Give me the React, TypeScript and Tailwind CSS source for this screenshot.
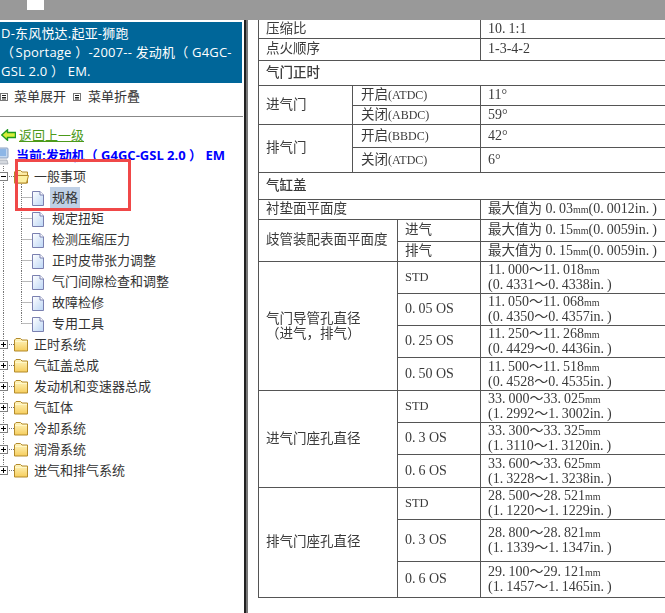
import React from "react";

const UI = '"Open Sans","Noto Sans CJK SC",sans-serif';

function MenuIcon() {
  return (
    <svg width="8" height="8" viewBox="0 0 8 8" className="shrink-0" aria-hidden>
      <rect x="0.5" y="0.5" width="7" height="7" fill="#fff" stroke="#777" />
      <path d="M2 2.5h4M2 4.5h4M2 6h4" stroke="#222" strokeWidth="1" />
    </svg>
  );
}

function BackArrow() {
  return (
    <svg width="15" height="12" viewBox="0 0 15 12" aria-hidden>
      <path d="M0.7 6 6.5 0.8V3.5H14.5V8.5H6.5V11.2Z" fill="#d8ee3a" stroke="#1f9a1f" strokeWidth="1.4" />
    </svg>
  );
}

function Computer() {
  return (
    <svg width="9" height="18" viewBox="0 0 9 18" aria-hidden>
      <rect x="-4" y="1" width="12" height="10" rx="1" fill="#c4d8f0" stroke="#8aa0c0" />
      <rect x="-3" y="2" width="9" height="7" fill="#8db6e6" />
      <path d="M-4 13h11l1 4H-4Z" fill="#d5d9df" stroke="#9a9fa9" strokeWidth="0.7" />
    </svg>
  );
}

function Folder({ x, open }: { x: number; open?: boolean }) {
  return (
    <g transform={`translate(${x},3)`}>
      <path d="M0.5 14V3L2 1.5H6.5L8 3H13.5V14Z" fill="url(#fold)" stroke="#b38a2a" />
      {open ? (
        <path d="M0.5 14 3 6.5H14.5L12.5 14Z" fill="#fdf0a2" stroke="#b38a2a" />
      ) : (
        <path d="M1 4.5H13" stroke="#fff7c8" />
      )}
    </g>
  );
}

function Doc({ x }: { x: number }) {
  return (
    <g transform={`translate(${x},4)`}>
      <path d="M0.5 0.5H8L11.5 4V14.5H0.5Z" fill="url(#doc)" stroke="#7a80b0" />
      <path d="M8 0.5V4H11.5" fill="#fff" stroke="#7a80b0" />
    </g>
  );
}

const dot = { stroke: "#777", strokeDasharray: "1 1" };

function Glyph({ kind, last, open, end }: { kind: "plus" | "minus" | "doc"; last?: boolean; open?: boolean; end?: boolean }) {
  const isDoc = kind === "doc";
  return (
    <svg width="46" height="21" viewBox="0 0 46 21" className="shrink-0" aria-hidden>
      <defs>
        <linearGradient id="fold" x1="0" y1="0" x2="0" y2="1">
          <stop offset="0" stopColor="#fff6c2" />
          <stop offset="1" stopColor="#f6cd5c" />
        </linearGradient>
        <linearGradient id="doc" x1="0" y1="0" x2="1" y2="1">
          <stop offset="0" stopColor="#ffffff" />
          <stop offset="1" stopColor="#bcd6f5" />
        </linearGradient>
      </defs>
      <path d={end ? "M3.5 0V10" : "M3.5 0V21"} {...dot} />
      {isDoc ? (
        <>
          <path d={last ? "M21.5 0V10.5" : "M21.5 0V21"} {...dot} />
          <path d="M21.5 10.5H32" {...dot} />
          <Doc x={32} />
        </>
      ) : (
        <>
          <path d="M7 10.5H14" {...dot} />
          {open && <path d="M21.5 16V21" {...dot} />}
          <rect x="-0.5" y="6.5" width="8" height="8" fill="#fff" stroke="#808080" />
          <path d="M1 10.5H6" stroke="#000" />
          {kind === "plus" && <path d="M3.5 8V13" stroke="#000" />}
          <Folder x={14} open={open} />
        </>
      )}
    </svg>
  );
}

function TreeRow({ label, kind, last, open, selected, end }: { label: string; kind: "plus" | "minus" | "doc"; last?: boolean; open?: boolean; selected?: boolean; end?: boolean }) {
  return (
    <div className="flex h-[21px] items-center whitespace-nowrap text-[13px] text-[#333]">
      <Glyph kind={kind} last={last} open={open} end={end} />
      <span className={kind === "doc" ? (selected ? "ml-[4px] bg-[#bfd0e6] px-[2px] leading-[21px]" : "ml-[6px]") : "-ml-[12px]"}>{label}</span>
    </div>
  );
}

/* The scanned table sets digits on a full-width grid: dots get a gap, "mm" is narrow, CJK is a little smaller than the Latin body. */
function Rich({ text, small }: { text: string; small?: boolean }) {
  const parts = text.split(/(\.|mm|[\u4e00-\u9fff]+)/).filter(Boolean);
  return (
    <>
      {parts.map((p, i) => {
        if (p === ".") return <span key={i} className="mr-[3px]">.</span>;
        if (p === "mm") return <span key={i} className="text-[10px]">mm</span>;
        if (/[\u4e00-\u9fff]/.test(p)) return <span key={i} className="text-[13.5px]">{p}</span>;
        return <span key={i} className={small ? "text-[12px]" : ""}>{p}</span>;
      })}
    </>
  );
}

type Cell = { t?: string; l2?: string; cs?: number; rs?: number; cjk?: boolean; bold?: boolean; pl?: boolean; stdw?: boolean };
type Row = { h: number; cells: Cell[] };

const two = (a: string, b: string): Cell => ({ t: a, l2: b });

const rows: Row[] = [
  { h: 18, cells: [{ t: "压缩比", cs: 3, cjk: true }, { t: "10.1:1" }] },
  { h: 22, cells: [{ t: "点火顺序", cs: 3, cjk: true }, { t: "1-3-4-2" }] },
  { h: 25, cells: [{ t: "气门正时", cs: 4, cjk: true, bold: true }] },
  { h: 20, cells: [{ t: "进气门", rs: 2, cjk: true }, { t: "开启(ATDC)", cs: 2, pl: true }, { t: "11°" }] },
  { h: 19, cells: [{ t: "关闭(ABDC)", cs: 2, pl: true }, { t: "59°" }] },
  { h: 23, cells: [{ t: "排气门", rs: 2, cjk: true }, { t: "开启(BBDC)", cs: 2, pl: true }, { t: "42°" }] },
  { h: 25, cells: [{ t: "关闭(ATDC)", cs: 2, pl: true }, { t: "6°" }] },
  { h: 27, cells: [{ t: "气缸盖", cs: 4, cjk: true, bold: true }] },
  { h: 20, cells: [{ t: "衬垫面平面度", cs: 3, cjk: true }, { t: "最大值为 0.03mm(0.0012in.)" }] },
  { h: 22, cells: [{ t: "歧管装配表面平面度", cs: 2, rs: 2, cjk: true }, { t: "进气", cjk: true }, { t: "最大值为 0.15mm(0.0059in.)" }] },
  { h: 20, cells: [{ t: "排气", cjk: true }, { t: "最大值为 0.15mm(0.0059in.)" }] },
  { h: 32, cells: [{ t: "气门导管孔直径", l2: "（进气，排气）", cs: 2, rs: 4, cjk: true }, { t: "STD", stdw: true }, two("11.000～11.018mm", "(0.4331～0.4338in.)")] },
  { h: 32, cells: [{ t: "0.05 OS" }, two("11.050～11.068mm", "(0.4350～0.4357in.)")] },
  { h: 32, cells: [{ t: "0.25 OS" }, two("11.250～11.268mm", "(0.4429～0.4436in.)")] },
  { h: 33, cells: [{ t: "0.50 OS" }, two("11.500～11.518mm", "(0.4528～0.4535in.)")] },
  { h: 32, cells: [{ t: "进气门座孔直径", cs: 2, rs: 3, cjk: true }, { t: "STD", stdw: true }, two("33.000～33.025mm", "(1.2992～1.3002in.)")] },
  { h: 32, cells: [{ t: "0.3 OS" }, two("33.300～33.325mm", "(1.3110～1.3120in.)")] },
  { h: 33, cells: [{ t: "0.6 OS" }, two("33.600～33.625mm", "(1.3228～1.3238in.)")] },
  { h: 32, cells: [{ t: "排气门座孔直径", cs: 2, rs: 3, cjk: true }, { t: "STD", stdw: true }, two("28.500～28.521mm", "(1.1220～1.1229in.)")] },
  { h: 42, cells: [{ t: "0.3 OS" }, two("28.800～28.821mm", "(1.1339～1.1347in.)")] },
  { h: 36, cells: [{ t: "0.6 OS" }, two("29.100～29.121mm", "(1.1457～1.1465in.)")] },
];

function SpecTable() {
  return (
    <table
      className="w-[425px] table-fixed border-collapse text-[#3a3a3a] [filter:blur(0.35px)]"
      style={{ fontFamily: '"Liberation Serif","Noto Sans CJK SC",serif' }}
    >
      <colgroup>
        <col className="w-[94px]" />
        <col className="w-[45px]" />
        <col className="w-[83px]" />
        <col className="w-[203px]" />
      </colgroup>
      <tbody>
        {rows.map((r, i) => (
          <tr key={i} style={{ height: r.h }}>
            {r.cells.map((c, j) => (
              <td
                key={j}
                colSpan={c.cs}
                rowSpan={c.rs}
                className={`overflow-hidden whitespace-nowrap border border-[#555] p-0 align-middle ${c.cjk ? "pl-[7px] text-[13.5px]" : c.pl ? "pl-[8px] text-[14px]" : c.stdw ? "pl-[7px] text-[12.5px]" : "pl-[7px] text-[14px]"} ${c.bold ? "font-medium" : ""} ${i === 0 ? "border-t-0" : ""}`}
              >
                {c.l2 ? (
                  <>
                    <div className="h-[15px] leading-[15px]">{c.cjk ? c.t : <Rich text={c.t ?? ""} />}</div>
                    <div className="h-[15px] leading-[15px]">{c.cjk ? c.l2 : <Rich text={c.l2} />}</div>
                  </>
                ) : (
                  <div className="h-[16px] leading-[16px]">{c.cjk ? c.t : <Rich text={c.t ?? ""} small={c.pl} />}</div>
                )}
              </td>
            ))}
          </tr>
        ))}
      </tbody>
    </table>
  );
}

export default function App() {
  return (
    <div className="flex h-[613px] w-[665px] flex-col overflow-hidden bg-white">
      <div className="h-[20px] shrink-0 bg-[#999999]">
        <div className="ml-[27px] h-[10px] w-[17px] bg-white" />
      </div>
      <div className="flex min-h-0 flex-1">
        <div className="w-[244px] shrink-0 pt-[2px]" style={{ fontFamily: UI }}>
          <div className="h-[61px] w-[242px] whitespace-nowrap bg-[#006699] pl-[1px] pt-[2px] text-[13px] leading-[19px] tracking-[0.2px] text-white">
            <div>D-东风悦达.起亚-狮跑</div>
            <div><span className="tracking-[-2px]">（</span> Sportage ）-2007-- 发动机（ G4GC-</div>
            <div>GSL 2.0 ） EM.</div>
          </div>
          <div className="flex h-[33px] w-[243px] items-center pb-[6px] text-[13px] text-[#333]">
            <div className="flex items-center gap-[6px]">
              <MenuIcon />
              <span>菜单展开</span>
            </div>
            <div className="ml-[7px] flex items-center gap-[7px]">
              <MenuIcon />
              <span>菜单折叠</span>
            </div>
          </div>
          <div className="h-[1px] w-[243px] bg-[#888]" />
          <div className="flex h-[29px] items-end gap-[3px] pl-[1px] pb-[2px] text-[13px]">
            <span className="mb-[3px] flex"><BackArrow /></span>
            <span className="leading-[18px] text-[#4c9a1a] underline">返回上一级</span>
          </div>
          <div className="flex h-[20px] items-center gap-[7px] whitespace-nowrap text-[13px] font-bold text-[#0000ff]">
            <Computer />
            <span>当前:发动机（ G4GC-GSL 2.0 ） EM</span>
          </div>
          <div className="relative">
            <TreeRow kind="minus" open label="一般事项" />
            <TreeRow kind="doc" label="规格" selected />
            <TreeRow kind="doc" label="规定扭矩" />
            <TreeRow kind="doc" label="检测压缩压力" />
            <TreeRow kind="doc" label="正时皮带张力调整" />
            <TreeRow kind="doc" label="气门间隙检查和调整" />
            <TreeRow kind="doc" label="故障检修" />
            <TreeRow kind="doc" last label="专用工具" />
            <TreeRow kind="plus" label="正时系统" />
            <TreeRow kind="plus" label="气缸盖总成" />
            <TreeRow kind="plus" label="发动机和变速器总成" />
            <TreeRow kind="plus" label="气缸体" />
            <TreeRow kind="plus" label="冷却系统" />
            <TreeRow kind="plus" label="润滑系统" />
            <TreeRow kind="plus" end label="进气和排气系统" />
            <div className="absolute left-[15px] top-[-7px] h-[52px] w-[116px] border-[3px] border-[#f04848]" />
          </div>
        </div>
        <div className="w-[2px] shrink-0 bg-[#222]" />
        <div className="w-[2px] shrink-0 bg-[#777]" />
        <div className="flex-1 pl-[10px]">
          <SpecTable />
        </div>
      </div>
    </div>
  );
}
